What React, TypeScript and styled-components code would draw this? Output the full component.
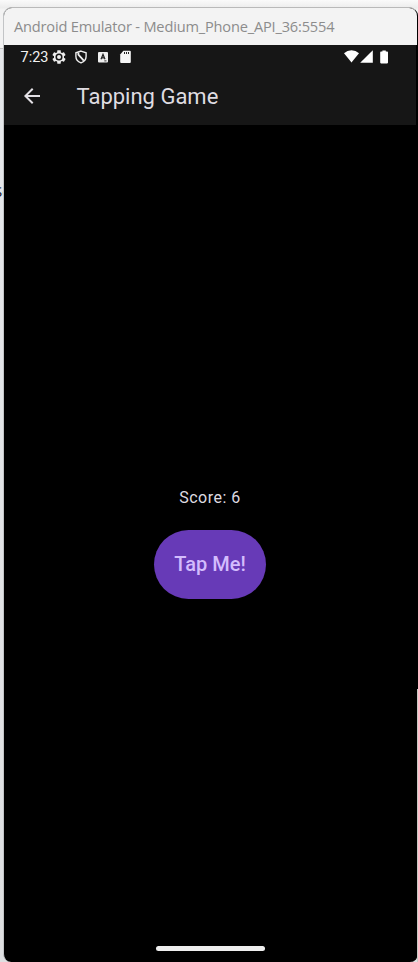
import React from "react";
import styled, { createGlobalStyle } from "styled-components";

const GlobalStyle = createGlobalStyle`
  * { box-sizing: border-box; }
  body { margin: 0; overflow: hidden; background: #f3f3f3; }
`;

const Desktop = styled.div`
  position: relative;
  width: 418px;
  height: 962px;
  padding: 7px 0 0 3px;
  overflow: hidden;
  background: linear-gradient(#fafafa, #ececec 8px, #f3f3f3 9px, #f3f3f3 48px, #c4c4c4 48px, #c4c4c4 49px, #e6e8eb 49px, #dedfe1 100%);
`;

const ClippedText = styled.span`
  position: absolute;
  left: -6px;
  top: 181px;
  font: 15px/20px "Open Sans", sans-serif;
  color: #14142c;
`;

const EdgeStrip = styled.div`
  position: absolute;
  right: 0;
  top: 689px;
  width: 1px;
  height: 273px;
  background: #c9cac5;
`;

const EmulatorWindow = styled.div`
  position: relative;
  display: flex;
  flex-direction: column;
  width: 415px;
  height: 955px;
  border: 1px solid #b9b9b9;
  border-bottom: 0;
  border-radius: 9px 9px 8px 8px;
  border-right-color: #000;
  border-left-color: #c2c4c6;
  background: #000;
  overflow: hidden;
`;

const TitleBar = styled.header`
  flex: none;
  display: flex;
  align-items: center;
  height: 37px;
  width: 414px;
  padding: 0 0 1px 10px;
  border-right: 1px solid #b9b9b9;
  border-top-right-radius: 8px;
  background: #f3f3f3;
  color: #8c8c8c;
  font: 14.6px/20px "Open Sans", sans-serif;
  white-space: nowrap;
`;

const TitleText = styled.span`
  letter-spacing: -0.18px;
`;

const StatusBar = styled.div`
  flex: none;
  display: flex;
  align-items: center;
  height: 23px;
  width: 412px;
  padding: 0 28px 0 16.5px;
  background: #161616;
  color: #f2f2f2;
  font: 14.5px/23px Roboto, sans-serif;
`;

const Clock = styled.span`
  width: 31.5px;
  padding-top: 1px;
  white-space: nowrap;
`;

const StatusIcons = styled.div`
  display: flex;
  align-items: center;
  gap: 8px;
`;

const SystemIcons = styled.div`
  display: flex;
  align-items: center;
  margin-left: auto;
`;

const AppBar = styled.div`
  flex: none;
  display: flex;
  align-items: center;
  height: 57px;
  width: 412px;
  padding: 0 0 1px 16px;
  background: #161616;
`;

const BackButton = styled.button`
  display: flex;
  width: 24px;
  height: 24px;
  padding: 0;
  border: 0;
  background: none;
  color: #e3e0e5;
`;

const AppTitle = styled.h1`
  margin: 0 0 0 32.5px;
  padding-top: 2px;
  color: #dfdce1;
  font: 400 22px/28px Roboto, sans-serif;
  letter-spacing: 0;
`;

const Content = styled.main`
  flex: 1;
  display: flex;
  flex-direction: column;
  align-items: center;
  width: 412px;
  padding-top: 361px;
`;

const Score = styled.p`
  margin: 0 0 21px;
  color: #dedbe0;
  font: 400 16px/23px Roboto, sans-serif;
  letter-spacing: 0.5px;
`;

const TapButton = styled.button`
  width: 112px;
  height: 69px;
  padding: 0 0 1px;
  border: 0;
  border-radius: 35px;
  background: #673ab7;
  color: #d3bcfd;
  font: 500 20px/24px Roboto, sans-serif;
`;

const HomeHandle = styled.div`
  width: 109px;
  height: 5px;
  margin: auto 0 11px;
  border-radius: 3px;
  background: #eeeeee;
`;

const GearIcon = () => (
  <svg width="14" height="14" viewBox="1.5 1.5 21 21" fill="#eee">
    <path d="M19.43 12.98c.04-.32.07-.64.07-.98s-.03-.66-.07-.98l2.11-1.65c.19-.15.24-.42.12-.64l-2-3.46c-.12-.22-.39-.3-.61-.22l-2.49 1c-.52-.4-1.08-.73-1.69-.98l-.38-2.65C14.46 2.18 14.25 2 14 2h-4c-.25 0-.46.18-.49.42l-.38 2.65c-.61.25-1.17.59-1.69.98l-2.49-1c-.23-.09-.49 0-.61.22l-2 3.46c-.13.22-.07.49.12.64l2.11 1.65c-.04.32-.07.65-.07.98s.03.66.07.98l-2.11 1.65c-.19.15-.24.42-.12.64l2 3.46c.12.22.39.3.61.22l2.49-1c.52.4 1.08.73 1.69.98l.38 2.65c.03.24.24.42.49.42h4c.25 0 .46-.18.49-.42l.38-2.65c.61-.25 1.17-.59 1.69-.98l2.49 1c.23.09.49 0 .61-.22l2-3.46c.12-.22.07-.49-.12-.64z" />
    <circle cx="12" cy="12" r="5.3" fill="#161616" />
    <circle cx="12" cy="12" r="3" />
  </svg>
);

const ShieldIcon = () => (
  <svg width="14" height="14" viewBox="0 0 14 14" fill="none" stroke="#eee" strokeWidth="1.4">
    <path d="M7 1.1 L12.1 2.8 V6.6 C12.1 9.6 9.8 11.9 7 12.9 C4.2 11.9 1.9 9.6 1.9 6.6 V2.8 Z" />
    <path d="M4.4 2.6 V4.6 L9.8 10.6" strokeWidth="1.8" />
  </svg>
);

const LetterIcon = () => (
  <svg width="14" height="14" viewBox="0 0 14 14">
    <rect x="2" y="2" width="10" height="10.5" rx="1" fill="#eee" />
    <path d="M5 9.2 L7 4.4 L9 9.2 M5.7 7.8 H8.3" fill="none" stroke="#222" strokeWidth="1.2" />
    <path d="M8.3 10.9 H10.5" stroke="#222" strokeWidth=".9" />
  </svg>
);

const CardIcon = () => (
  <svg width="14" height="14" viewBox="0 0 14 14">
    <path d="M5.4 .8 H11.8 Q12.8 .8 12.8 1.8 V12 Q12.8 13 11.8 13 H3.2 Q2.2 13 2.2 12 V4.4 Z" fill="#f5f5f5" />
    <path d="M6.5 2 V4 M8.5 2 V4 M10.5 2 V4" stroke="#222" strokeWidth="1" />
  </svg>
);

const WifiIcon = () => (
  <svg width="15" height="13" viewBox="0 0 15 13" fill="#fff">
    <path d="M7.5 12.5 L0 3.2 Q3.2 .3 7.5 .3 T15 3.2 Z" />
  </svg>
);

const SignalIcon = () => (
  <svg width="14" height="13" viewBox="0 0 14 13" fill="#fff">
    <path d="M13.8 .3 V12.8 H1.2 Z" />
  </svg>
);

const BatteryIcon = () => (
  <svg width="15" height="14" viewBox="-1 0 15 14" fill="#fff">
    <path d="M8.4 .6 H11.8 V1.6 H13.2 Q14 1.6 14 2.4 V12.6 Q14 13.4 13.2 13.4 H7 Q6.2 13.4 6.2 12.6 V2.4 Q6.2 1.6 7 1.6 H8.4 Z" />
  </svg>
);

const BackArrow = () => (
  <svg width="24" height="24" viewBox="0 0 24 24" fill="currentColor">
    <path d="M20 11H7.83l5.59-5.59L12 4l-8 8 8 8 1.41-1.41L7.83 13H20v-2z" />
  </svg>
);

export default function App() {
  const [score, setScore] = React.useState(6);
  return (
    <Desktop>
      <GlobalStyle />
      <ClippedText>Se</ClippedText>
      <EmulatorWindow>
        <TitleBar>
          <TitleText>Android Emulator - Medium_Phone_API_36:5554</TitleText>
        </TitleBar>
        <StatusBar>
          <Clock>7:23</Clock>
          <StatusIcons>
            <GearIcon />
            <ShieldIcon />
            <LetterIcon />
            <CardIcon />
          </StatusIcons>
          <SystemIcons>
            <WifiIcon />
            <SignalIcon />
            <BatteryIcon />
          </SystemIcons>
        </StatusBar>
        <AppBar>
          <BackButton aria-label="Back">
            <BackArrow />
          </BackButton>
          <AppTitle>Tapping Game</AppTitle>
        </AppBar>
        <Content>
          <Score>Score: {score}</Score>
          <TapButton onClick={() => setScore(score + 1)}>Tap Me!</TapButton>
          <HomeHandle />
        </Content>
      </EmulatorWindow>
      <EdgeStrip />
    </Desktop>
  );
}
